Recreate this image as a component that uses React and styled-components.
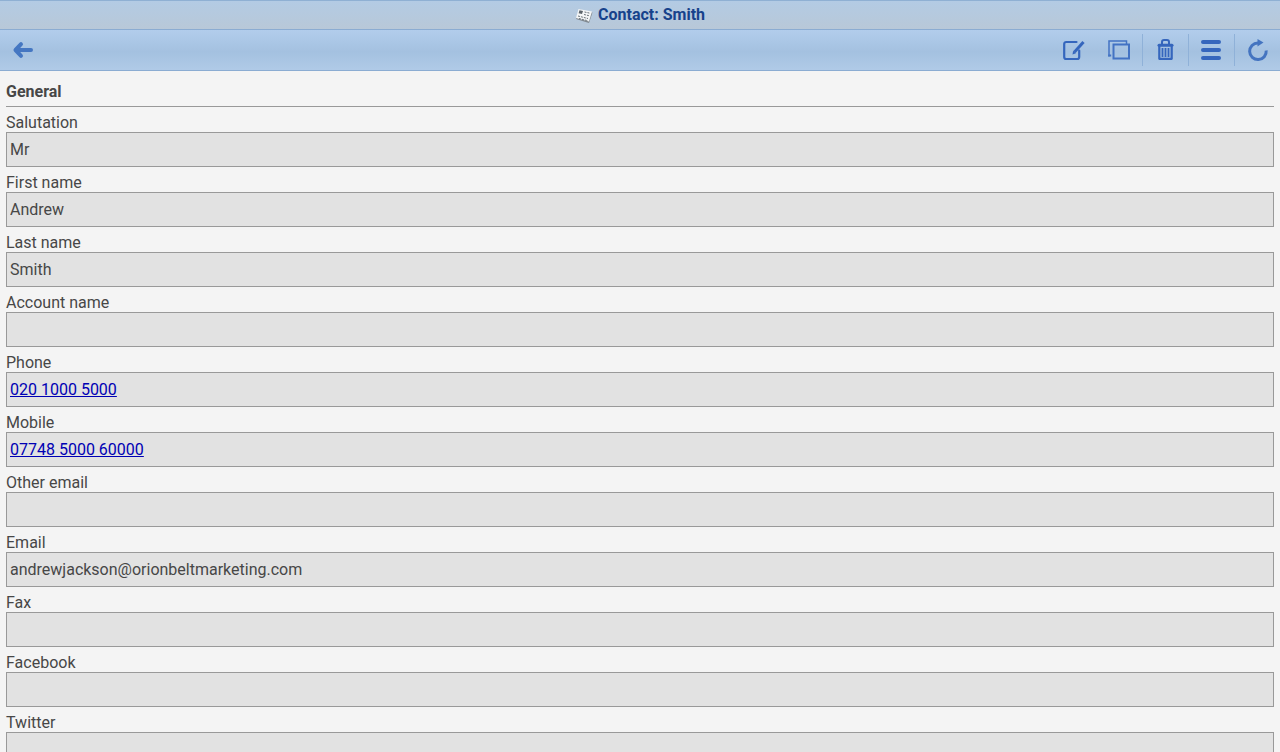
import React from "react";
import styled, { createGlobalStyle } from "styled-components";

const fields = [
    { id: "salutation", label: "Salutation", value: "Mr" },
    { id: "firstName", label: "First name", value: "Andrew" },
    { id: "lastName", label: "Last name", value: "Smith" },
    { id: "accountName", label: "Account name", value: "" },
    { id: "phone", label: "Phone", value: "020 1000 5000", tel: true },
    { id: "mobile", label: "Mobile", value: "07748 5000 60000", tel: true },
    { id: "otherEmail", label: "Other email", value: "" },
    { id: "email", label: "Email", value: "andrewjackson@orionbeltmarketing.com" },
    { id: "fax", label: "Fax", value: "" },
    { id: "facebook", label: "Facebook", value: "" },
    { id: "twitter", label: "Twitter", value: "" },
];

const Field = ({ id, label, value, tel }) => {
    if (tel) {
        return (
            <FieldRow role="group" aria-labelledby={`${id}_label`}>
                <Caption as="span" id={`${id}_label`}>{label}</Caption>
                <LinkBox>
                    <a href={`tel:${value.replace(/ /g, "")}`}>{value}</a>
                </LinkBox>
            </FieldRow>
        );
    }
    return (
        <FieldRow>
            <Caption htmlFor={id}>{label}</Caption>
            <TextBox id={id} type="text" value={value} readOnly />
        </FieldRow>
    );
};

const CardIcon = () => (
    <svg width="18" height="16" viewBox="0 0 18 16" aria-hidden="true">
        <path d="M4.5 2.5 17.5 5.5 14 16 1 12Z" fill="#7f878e" />
        <path d="M3.5 2 17 4.5 14 14.500 1 11Z" fill="#f4f6f7" />
        <path d="M4.5 3.200 8 4 7 7 3.600 6.200Z" fill="#5c646b" />
        <path d="M9.500 5 15 6.200M9 7.500 14 8.700M3 9 13 11.500M4 11.500 13 13.800" fill="none" stroke="#6b737a" strokeWidth="1" strokeDasharray="2 1" />
    </svg>
);

const BackIcon = () => (
    <Icon $color="#4577c2">
        <path d="M20 12H5M10 6.200 4.500 12l5.500 5.800" strokeWidth="4" />
    </Icon>
);

const EditIcon = () => (
    <Icon>
        <path d="M15.500 4H5.200a2 2 0 0 0-2 2v13a2 2 0 0 0 2 2h11a2 2 0 0 0 2-2v-6.500" strokeWidth="2.200" />
        <path d="M13.500 14 22.500 4" strokeWidth="3" strokeLinecap="butt" />
        <path d="M11.500 16.500 12.200 12.800 15 15.200Z" fill="currentColor" stroke="none" />
    </Icon>
);

const CopyIcon = () => (
    <Icon $color="#4373c3">
        <path d="M19.500 6V3H2v15.500" strokeWidth="1.500" strokeLinecap="butt" strokeLinejoin="miter" />
        <path d="M1.200 17.500h3" strokeWidth="2" strokeLinecap="butt" />
        <path d="M6.500 6.500h15.500v14H6.500Z" strokeWidth="2" strokeLinejoin="miter" />
    </Icon>
);

const TrashIcon = () => (
    <Icon>
        <path d="M9 6.500V4a2 2 0 0 1 2-2h3a2 2 0 0 1 2 2v2.500" strokeWidth="2" />
        <path d="M6 7.200h13" strokeWidth="3" />
        <path d="M6.300 8.500v12.300h12.400V8.500" strokeWidth="2.200" />
        <path d="M9.500 10v9M12.500 10v9M15.500 10v9" strokeWidth="1.800" strokeLinecap="butt" />
    </Icon>
);

const MenuIcon = () => (
    <Icon>
        <path d="M4 4h16M4 12h16M4 20h16" strokeWidth="4" />
    </Icon>
);

const RefreshIcon = () => (
    <Icon $color="#4474c0">
        <path d="M21.200 12.500A8.300 8.300 0 1 1 13 5" strokeWidth="3" strokeLinecap="butt" />
        <path d="M12.500 1 18.500 4.500 12.500 8.500Z" fill="currentColor" stroke="none" />
    </Icon>
);

const App = () => {
    return (
        <>
            <GlobalStyle />
            <Page>
                <TitleBar>
                    <CardIcon />
                    <Title>Contact: Smith</Title>
                </TitleBar>
                <Toolbar>
                    <ToolButton type="button" aria-label="Back"><BackIcon /></ToolButton>
                    <ToolGroup>
                        <ToolButton type="button" aria-label="Edit"><EditIcon /></ToolButton>
                        <ToolButton type="button" aria-label="Copy"><CopyIcon /></ToolButton>
                        <ToolButton type="button" aria-label="Delete" $divider><TrashIcon /></ToolButton>
                        <ToolButton type="button" aria-label="Menu" $divider><MenuIcon /></ToolButton>
                        <ToolButton type="button" aria-label="Refresh" $divider><RefreshIcon /></ToolButton>
                    </ToolGroup>
                </Toolbar>
                <Content>
                    <SectionTitle>General</SectionTitle>
                    {fields.map((f) => (
                        <Field key={f.id} {...f} />
                    ))}
                </Content>
            </Page>
        </>
    );
};

const GlobalStyle = createGlobalStyle`
* {
    box-sizing: border-box;
}
body {
    margin: 0;
    background-color: #f4f4f4;
    color: #474747;
    font-family: Roboto, "Liberation Sans", sans-serif;
    font-size: 16px;
    line-height: 18px;
}
`;
const Page = styled.div`
display: flex;
flex-direction: column;
height: 100vh;
`;
const TitleBar = styled.header`
display: flex;
flex: none;
justify-content: center;
align-items: center;
gap: 5px;
height: 30px;
border-top: 1px solid #8fb0d3;
border-bottom: 1px solid #8bacd2;
background: linear-gradient(#b3cbe4, #b8c8d8);
`;
const Title = styled.h1`
margin: 0;
color: #17428b;
font-size: 16px;
font-weight: bold;
`;
const Toolbar = styled.div`
display: flex;
flex: none;
justify-content: space-between;
align-items: center;
height: 41px;
border-bottom: 1px solid #8bacd2;
background: linear-gradient(#b2cdec, #a4c1e0 55%, #b0cae7);
`;
const ToolGroup = styled.div`
display: flex;
`;
const ToolButton = styled.button`
display: flex;
justify-content: center;
align-items: center;
width: 46px;
height: 32px;
padding: 0;
padding-right: ${(props) => (props.$divider ? "1px" : "0")};
border: none;
border-left: ${(props) => (props.$divider ? "1px solid #8fb1d8" : "none")};
background: none;
cursor: pointer;
`;
const Icon = styled.svg.attrs({ viewBox: "0 0 24 24", "aria-hidden": true })`
width: 24px;
height: 24px;
color: ${(props) => props.$color || "#3566bd"};
fill: none;
stroke: currentColor;
stroke-linecap: round;
stroke-linejoin: round;
`;
const Content = styled.main`
flex: 1;
min-height: 0;
padding: 0 6px 6px;
overflow-y: auto;
scrollbar-width: none;
`;
const SectionTitle = styled.h2`
margin: 0;
padding: 12px 0 5px;
border-bottom: 1px solid #999;
font-size: 16px;
font-weight: bold;
`;
const FieldRow = styled.div`
display: flex;
flex-direction: column;
`;
const Caption = styled.label`
padding-top: 7px;
`;
const TextBox = styled.input`
width: 100%;
height: 35px;
padding: 0 3px;
border: 1px solid #999;
border-radius: 0;
background-color: #e2e2e2;
color: inherit;
font: inherit;
outline: none;
`;
const LinkBox = styled.div`
display: flex;
align-items: center;
height: 35px;
padding: 0 3px;
border: 1px solid #999;
background-color: #e2e2e2;

a {
    color: #0000b4;
}
`;
export default App;
